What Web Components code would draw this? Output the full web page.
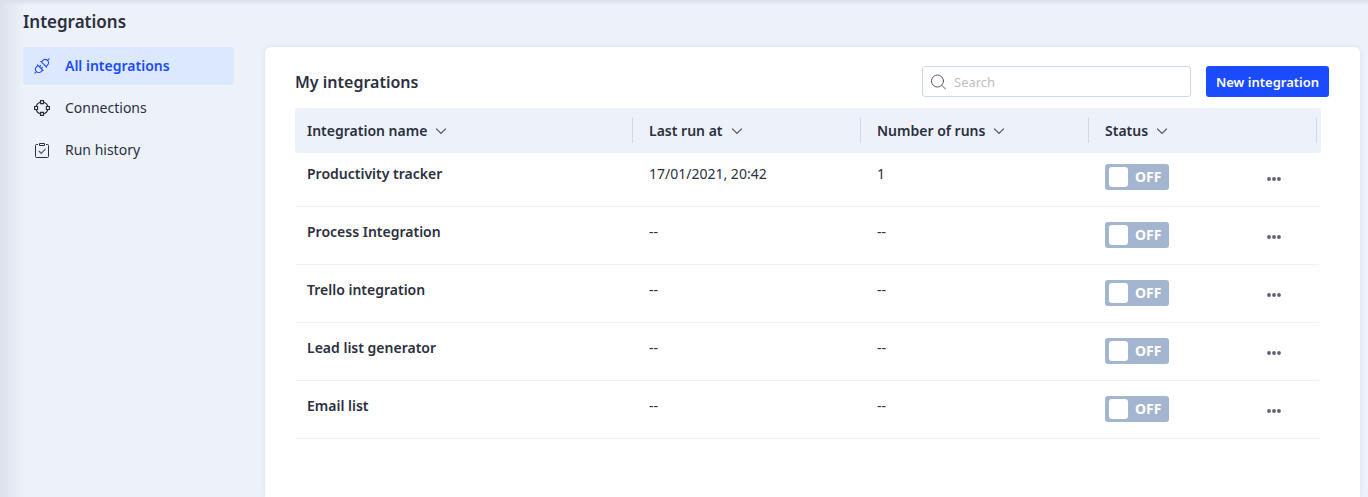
<!DOCTYPE html>
<html lang="en">
<head>
<meta charset="utf-8">
<title>Integrations</title>
<style>
  html, body { height: 100%; }
  body {
    --ink: #2b2f3e;
    --line: #edf2fa;
    --page: #edf2fa;
    --edge: #c9d9f0;
    --brand: #1a4bff;
    margin: 0;
    background: var(--page);
    color: var(--ink);
    font: 14px/20px "Noto Sans", "Open Sans", sans-serif;
  }
</style>
</head>
<body>
<integrations-app>
  <side-nav slot="nav">
    <nav-item active>
      <svg slot="icon" width="16" height="16" viewBox="0 0 16 16" fill="none" stroke="currentColor" stroke-width="1.1" stroke-linecap="round" stroke-linejoin="round">
        <g transform="translate(8 8) rotate(-45)">
          <path d="M-10 0h2M10 0h-2M-2.400-4V4M2.400-4V4M-2.400-3.300H-4.500a3.300 3.300 0 0 0 0 6.600H-2.400M2.400-3.300H4.500a3.300 3.300 0 0 1 0 6.600H2.400M-2.400-1.300H-.6M-2.400 1.300H-.6"/>
        </g>
      </svg>
      All integrations
    </nav-item>
    <nav-item>
      <svg slot="icon" width="16" height="16" viewBox="0 0 16 16" fill="none" stroke="currentColor" stroke-width="1.2">
        <path d="M10 2.200A6.200 6.200 0 0 1 13.800 6M13.800 10A6.200 6.200 0 0 1 10 13.800M6 13.800A6.200 6.200 0 0 1 2.200 10M2.200 6A6.200 6.200 0 0 1 6 2.200"/>
        <path d="M6.500.6h3v3h-3zM12.400 6.500h3v3h-3zM6.500 12.400h3v3h-3zM.6 6.500h3v3h-3z"/>
      </svg>
      Connections
    </nav-item>
    <nav-item>
      <svg slot="icon" width="16" height="16" viewBox="0 0 16 16" fill="none" stroke="currentColor" stroke-width="1">
        <path d="M4 2.500H2.500a1 1 0 0 0-1 1v11a1 1 0 0 0 1 1h11a1 1 0 0 0 1-1v-11a1 1 0 0 0-1-1H12M5.500 1.500h5v2h-5z"/>
        <path d="M4.800 9l2.500 2.300L11.500 6.800" stroke="#555a66" stroke-width="1.200"/>
      </svg>
      Run history
    </nav-item>
  </side-nav>
  <content-panel heading="My integrations">
    <search-box slot="actions"></search-box>
    <primary-button slot="actions">New integration</primary-button>
    <integration-table></integration-table>
  </content-panel>
</integrations-app>

<script>
  const define = (name, html, setup) => {
    const template = document.createElement('template');
    template.innerHTML = html;
    customElements.define(name, class extends HTMLElement {
      constructor() {
        super();
        this.attachShadow({ mode: 'open' }).append(template.content.cloneNode(true));
      }
      connectedCallback() {
        if (setup) setup(this, this.shadowRoot);
      }
    });
  };

  define('integrations-app', `
    <style>
      :host {
        box-sizing: border-box; min-height: 100%;
        display: flex; flex-direction: column; padding: 8px 8px 0 23px;
        background:
          linear-gradient(to right, #dbe0ea, #dbe0ea00 24px),
          linear-gradient(#d9dee8, #d9dee800 6px);
      }
      h1 { margin: 0 0 12px; font-size: 17px; line-height: 27px; font-weight: 600; }
      .body { flex: 1; display: grid; grid-template-columns: 211px minmax(0, 1fr); gap: 31px; }
    </style>
    <h1>Integrations</h1>
    <div class="body"><slot name="nav"></slot><slot></slot></div>`);

  define('side-nav', `
    <style>
      :host { display: block; }
      nav { display: flex; flex-direction: column; gap: 4px; }
    </style>
    <nav aria-label="Integrations"><slot></slot></nav>`);

  define('nav-item', `
    <style>
      :host { display: block; }
      a {
        display: flex; align-items: center; gap: 15px; height: 38px; padding: 0 11px;
        border-radius: 3px; color: inherit; text-decoration: none;
      }
      ::slotted(svg) { display: block; }
      :host([active]) a { background: #dce8ff; color: var(--brand); font-weight: 600; }
    </style>
    <a href="#"><slot name="icon"></slot><span><slot></slot></span></a>`);

  define('content-panel', `
    <style>
      :host {
        display: block; padding: 19px 31px 24px 30px; background: #fff;
        border-radius: 6px 6px 0 0; box-shadow: 0 0 5px #c3cfe288;
      }
      header { display: flex; align-items: center; gap: 15px; margin-bottom: 11px; }
      h2 { flex: 1; margin: 0; font-size: 16px; line-height: 24px; font-weight: 600; }
    </style>
    <header><h2></h2><slot name="actions"></slot></header>
    <slot></slot>`,
    (host, root) => { root.querySelector('h2').textContent = host.getAttribute('heading'); });

  define('search-box', `
    <style>
      :host { display: block; width: 269px; }
      label {
        box-sizing: border-box; display: flex; align-items: center; gap: 8px;
        height: 31px; padding: 0 8px; border: 1px solid var(--edge); border-radius: 3px; background: #fff;
      }
      svg { flex: none; color: #565b68; }
      input {
        flex: 1; min-width: 0; border: 0; padding: 0; outline: 0; background: none;
        font: inherit; font-size: 13px; line-height: 18px; color: inherit;
      }
      input::placeholder { color: #bdbdbd; opacity: 1; }
    </style>
    <label>
      <svg width="15" height="16" viewBox="0 0 15 16" fill="none" stroke="currentColor" stroke-linecap="round">
        <circle cx="6.500" cy="7" r="6"/><path d="M11 11.500l3.500 3.500"/>
      </svg>
      <input type="text" placeholder="Search" aria-label="Search">
    </label>`);

  define('primary-button', `
    <style>
      :host { display: block; }
      button {
        width: 123px; height: 31px; padding: 0; border: 0; border-radius: 3px;
        background: var(--brand); color: #fff; font: inherit; font-size: 13px; line-height: 18px; font-weight: 600;
        white-space: nowrap;
      }
    </style>
    <button type="button"><slot></slot></button>`);

  define('sort-button', `
    <style>
      :host { display: block; }
      button {
        display: flex; align-items: center; gap: 8px; padding: 0; border: 0;
        background: none; color: inherit; font: inherit; line-height: 20px;
      }
      svg { color: #5b606d; }
    </style>
    <button type="button"><span><slot></slot></span>
      <svg width="12" height="8" viewBox="0 0 12 8" fill="none" stroke="currentColor" stroke-width="1.200" stroke-linecap="round"><path d="M1.500 2L6 6.500 10.500 2"/></svg>
    </button>`);

  define('toggle-switch', `
    <style>
      :host { display: block; }
      label {
        box-sizing: border-box; display: flex; align-items: center; gap: 7px;
        width: 64px; height: 26px; padding: 0 4px; border-radius: 3px;
        background: #a4b5d0; color: #fff; font-weight: 700; line-height: 20px;
      }
      input {
        appearance: none; flex: none; width: 19px; height: 20px; margin: 0;
        border-radius: 3px; background: #fff;
      }
    </style>
    <label><input type="checkbox" role="switch"><span>OFF</span></label>`);

  define('more-button', `
    <style>
      :host { display: block; }
      button {
        display: grid; place-items: center; width: 30px; height: 30px;
        padding: 0; border: 0; background: none; color: #5d616d;
      }
    </style>
    <button type="button" aria-label="More actions">
      <svg width="14" height="4" viewBox="0 0 14 4" fill="currentColor"><circle cx="2" cy="2" r="1.900"/><circle cx="7" cy="2" r="1.900"/><circle cx="12" cy="2" r="1.900"/></svg>
    </button>`);

  const integrations = [
    ['Productivity tracker', '17/01/2021, 20:42', '1'],
    ['Process Integration', '--', '--'],
    ['Trello integration', '--', '--'],
    ['Lead list generator', '--', '--'],
    ['Email list', '--', '--'],
  ];

  define('integration-table', `
    <style>
      :host { display: block; margin-right: 8px; }
      table { width: 100%; table-layout: fixed; border-spacing: 0; }
      th { text-align: left; font-weight: 600; }
      thead th { height: 45px; padding: 0; background: var(--page); }
      thead th:first-child { border-radius: 3px 0 0 3px; }
      thead th:last-child { border-radius: 0 3px 3px 0; }
      .head { display: flex; align-items: center; height: 25px; padding-left: 16px; border-right: 1px solid var(--edge); }
      thead th:first-child .head { padding-left: 12px; }
      tbody :is(td, th) {
        box-sizing: border-box; height: 58px; padding: 15px 16px 0;
        border-bottom: 1px solid var(--line); vertical-align: top;
      }
      tbody th { padding-left: 12px; }
      tbody tr:first-child :is(td, th) { height: 54px; padding-top: 11px; }
      tbody td:last-child { padding: 0; border-bottom-right-radius: 4px; }
      .status { display: flex; justify-content: space-between; padding-right: 12px; }
      .data { width: 228px; }
      .end { width: 4px; }
    </style>
    <table>
      <colgroup><col><col class="data"><col class="data"><col class="data"><col class="end"></colgroup>
      <thead><tr>
        <th scope="col"><div class="head"><sort-button>Integration name</sort-button></div></th>
        <th scope="col"><div class="head"><sort-button>Last run at</sort-button></div></th>
        <th scope="col"><div class="head"><sort-button>Number of runs</sort-button></div></th>
        <th scope="col"><div class="head"><sort-button>Status</sort-button></div></th>
        <th></th>
      </tr></thead>
      <tbody></tbody>
    </table>`,
    (host, root) => {
      root.querySelector('tbody').innerHTML = integrations.map(([name, lastRun, runs]) => `
        <tr>
          <th scope="row">${name}</th><td>${lastRun}</td><td>${runs}</td>
          <td><div class="status"><toggle-switch></toggle-switch><more-button></more-button></div></td>
          <td></td>
        </tr>`).join('');
    });
</script>
</body>
</html>
